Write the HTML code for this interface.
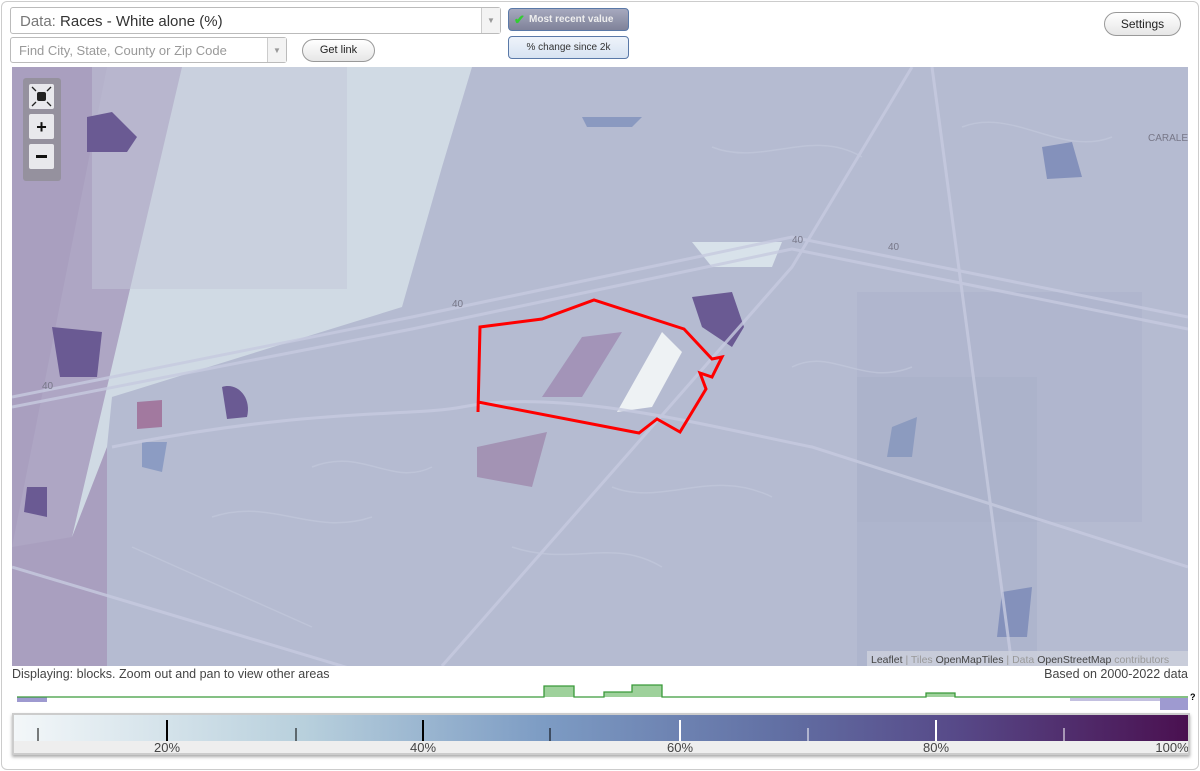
<!DOCTYPE html>
<html><head><meta charset="utf-8"><style>
body{margin:0;width:1200px;height:771px;background:#fff;font-family:"Liberation Sans",sans-serif;position:relative;overflow:hidden}
.frame{position:absolute;left:1px;top:1px;width:1196px;height:767px;border:1px solid #ccc;border-radius:6px}
.sel{position:absolute;border:1px solid #bbb;border-radius:3px;background:#fff;box-sizing:border-box}
.arrow{position:absolute;right:0;top:0;bottom:0;width:18px;border-left:1px solid #ccc;background:#f3f3f3;color:#999;font-size:8px;text-align:center}
.btn{position:absolute;border:1px solid #999;border-radius:12px;background:linear-gradient(#fff,#e6e6e6);font-size:11px;text-align:center;box-sizing:border-box}
</style></head><body>
<div class="frame"></div>
<div class="sel" style="left:10px;top:7px;width:491px;height:27px;font-size:15px;color:#333;padding:5px 0 0 9px"><span style="color:#777">Data:</span> Races - White alone (%)<div class="arrow" style="line-height:26px">▼</div></div>
<div class="sel" style="left:10px;top:37px;width:277px;height:26px;font-size:13px;color:#999;padding:5px 0 0 8px">Find City, State, County or Zip Code<div class="arrow" style="line-height:25px">▼</div></div>
<div class="btn" style="left:302px;top:39px;width:73px;height:23px;line-height:21px;color:#222">Get link</div>
<div style="position:absolute;left:508px;top:8px;width:121px;height:23px;border:1px solid #5a79a8;border-radius:4px;background:linear-gradient(#a6a9be,#7f8299);box-sizing:border-box;color:#eee;font-size:10px;font-weight:bold;line-height:21px;padding-left:20px"><span style="position:absolute;left:5px;top:0;color:#3c3;font-size:13px">✔</span>Most recent value</div>
<div style="position:absolute;left:508px;top:36px;width:121px;height:23px;border:1px solid #5a79a8;border-radius:4px;background:linear-gradient(#eef3fa,#d7e3f2);box-sizing:border-box;color:#333;font-size:10px;line-height:21px;text-align:center">% change since 2k</div>
<div class="btn" style="left:1104px;top:12px;width:77px;height:24px;line-height:22px;color:#222;font-size:12px">Settings</div>

<svg style="position:absolute;left:12px;top:67px" width="1176" height="599" viewBox="0 0 1176 599">
<rect width="1176" height="599" fill="#b5bbd1"/>
<rect x="0" y="0" width="95" height="599" fill="#a99fbf"/>
<path d="M95 0 L410 0 L380 180 L300 260 L100 330 L60 470 L0 480 Z" fill="#aea6c4"/>
<path d="M170 0 L460 0 L430 100 L390 240 L100 330 L95 380 L60 470 Z" fill="#d0dae4"/>
<path d="M80 0 L335 0 L335 222 L80 222 Z" fill="#c2c6d8" opacity=".5"/>
<path d="M680 175 L770 175 L760 200 L700 200Z" fill="#d8e2ea"/>
<rect x="845" y="225" width="285" height="230" fill="#adb3cb" opacity=".6"/>
<rect x="845" y="310" width="180" height="289" fill="#aab1c9" opacity=".6"/>
<path d="M465 380 L535 365 L520 420 L465 410Z" fill="#a393b4"/>
<path d="M40 260 L90 265 L85 310 L48 310Z" fill="#6a5a93"/>
<path d="M210 320 C225 315 240 330 235 350 L215 352 Z" fill="#6a5a93"/>
<path d="M125 335 L150 333 L150 360 L125 362Z" fill="#a2799f"/>
<path d="M680 230 L720 225 L732 260 L720 280 L690 260Z" fill="#6a5a93"/>
<path d="M75 50 L100 45 L125 70 L115 85 L75 85Z" fill="#6a5a93"/>
<path d="M15 420 L35 420 L35 450 L12 445Z" fill="#6a5a93"/>
<path d="M530 330 L570 270 L610 265 L570 330Z" fill="#a394b8"/>
<path d="M605 345 L650 265 L670 285 L640 340Z" fill="#eef2f4"/>
<path d="M1030 80 L1060 75 L1070 110 L1035 112Z" fill="#8491bb"/>
<path d="M130 375 L155 375 L150 405 L130 400Z" fill="#8c9cc3"/>
<path d="M990 525 L1020 520 L1015 570 L985 570Z" fill="#8491bb"/>
<path d="M880 360 L905 350 L900 390 L875 390Z" fill="#8c9bbf"/>
<path d="M570 50 L630 50 L620 60 L575 60Z" fill="#8a99c0"/>
<g stroke="#c7cbe0" stroke-width="3" fill="none" opacity=".8">
<path d="M0 330 L400 250 L780 170 L1176 250"/>
<path d="M0 340 L400 262 L780 182 L1176 262"/>
<path d="M100 380 C300 340 400 350 450 340 C550 320 700 360 800 380 L1176 500"/>
<path d="M0 500 L400 620"/>
<path d="M430 599 L780 200 L900 0"/>
<path d="M920 0 L1000 599"/>
</g>
<g stroke="#c2c7dc" stroke-width="1.5" fill="none" opacity=".7">
<path d="M300 400 C350 380 380 420 420 400 M200 450 C260 430 300 470 360 450 M600 420 C650 440 700 400 760 430 M780 300 C820 280 850 320 900 300 M120 480 L300 560 M500 480 C560 500 600 470 650 500 M950 60 C1000 40 1050 90 1100 70 M700 80 C750 100 800 60 850 90"/>
</g>
<path d="M466 345 L468 260 L530 252 L582 233 L672 262 L700 292 L710 290 L700 310 L688 306 L694 322 L668 365 L645 352 L627 366 L466 335" fill="none" stroke="#f00" stroke-width="3"/>
<text x="30" y="322" font-size="10" fill="#778">40</text><text x="440" y="240" font-size="10" fill="#778">40</text>
<text x="780" y="176" font-size="10" fill="#778">40</text><text x="876" y="183" font-size="10" fill="#778">40</text>
<text x="1136" y="74" font-size="10" fill="#778">CARALE</text>
<rect x="11" y="11" width="38" height="103" rx="3" fill="#888" opacity=".6"/>
<rect x="17" y="17" width="25" height="25" rx="2" fill="#e8e8ec"/><rect x="25" y="25" width="9" height="9" rx="2" fill="#222"/>
<g stroke="#222" stroke-width="1.3"><path d="M20 20 L24 24 M39 20 L35 24 M20 39 L24 35 M39 39 L35 35"/></g>
<rect x="17" y="47" width="25" height="25" rx="2" fill="#e8e8ec"/><text x="29.5" y="66" font-size="18" font-weight="bold" text-anchor="middle" fill="#111">+</text>
<rect x="17" y="77" width="25" height="25" rx="2" fill="#e8e8ec"/><rect x="24" y="88" width="11" height="3" fill="#111"/>
<rect x="855" y="584" width="321" height="15" fill="#ccd0dc" opacity=".85"/>
<text x="859" y="596" font-size="10.5" fill="#999"><tspan fill="#444">Leaflet</tspan> | Tiles <tspan fill="#444">OpenMapTiles</tspan> | Data <tspan fill="#444">OpenStreetMap</tspan> contributors</text>
</svg>
<div style="position:absolute;left:12px;top:667px;font-size:12.5px;color:#444">Displaying: blocks. Zoom out and pan to view other areas</div>
<div style="position:absolute;right:12px;top:667px;font-size:12.5px;color:#444">Based on 2000-2022 data</div>
<svg style="position:absolute;left:0;top:683px" width="1200" height="30">
<rect x="17" y="14" width="30" height="5" fill="#9e9ad0"/><rect x="1160" y="15" width="28" height="12" fill="#9e9ad0"/>
<rect x="1070" y="15" width="90" height="3" fill="#c3c0e0"/>
<path d="M17 14 H544 V3 H574 V14 H604 V9 H632 V2 H662 V14 H926 V10 H955 V14 H1188" fill="#9ed19b" stroke="#3a9a3a" stroke-width="1.3"/>
<text x="1190" y="17" font-size="9" font-weight="bold">?</text>
</svg>
<div style="position:absolute;left:12px;top:713px;width:1178px;height:42px;border:2px solid #ccc;box-sizing:border-box;box-shadow:0 2px 3px #aaa">
<div style="height:26px;background:linear-gradient(90deg,#f3f7f9,#b7cfdc 25%,#7d9cc4 45%,#6270a4 65%,#574a89 80%,#4a1050)"></div>
<div style="height:12px;background:#eee"></div>
<svg style="position:absolute;left:0;top:0" width="1174" height="40">
<g stroke="#000"><line x1="24" y1="13" x2="24" y2="26"/><line x1="153" y1="5" x2="153" y2="26" stroke-width="2"/><line x1="282" y1="13" x2="282" y2="26"/><line x1="409" y1="5" x2="409" y2="26" stroke-width="2"/><line x1="536" y1="13" x2="536" y2="26"/></g>
<g stroke="#fff"><line x1="666" y1="5" x2="666" y2="26" stroke-width="2"/><line x1="794" y1="13" x2="794" y2="26"/><line x1="922" y1="5" x2="922" y2="26" stroke-width="2"/><line x1="1050" y1="13" x2="1050" y2="26"/></g>
<g font-size="13" fill="#444" text-anchor="middle"><text x="153" y="37">20%</text><text x="409" y="37">40%</text><text x="666" y="37">60%</text><text x="922" y="37">80%</text><text x="1158" y="37">100%</text></g>
</svg></div>
</body></html>
